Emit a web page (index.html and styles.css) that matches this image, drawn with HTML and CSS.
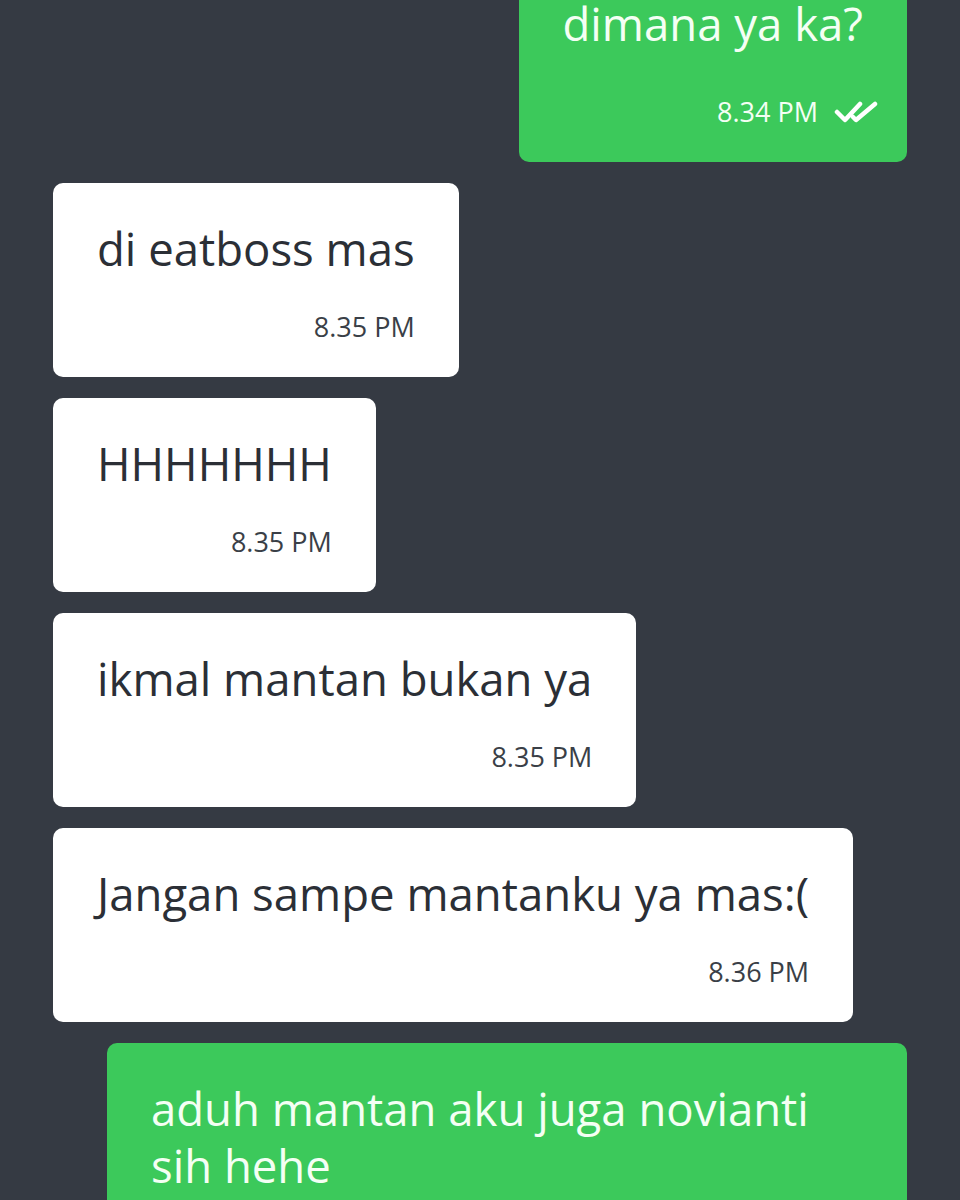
FILE: index.html
```html
<!DOCTYPE html>
<html lang="id">
<head>
<meta charset="utf-8">
<title>Chat</title>
<link rel="stylesheet" href="styles.css">
</head>
<body>
<main class="chat">
  <div class="bubble out">
    <p class="text">dimana ya ka?</p>
    <div class="meta"><span class="time">8.34 PM</span>
      <svg class="ticks" width="46" height="22" viewBox="0 0 46 22" aria-hidden="true">
        <path d="M3 11 L11 19 L26 3" fill="none" stroke="#fff" stroke-width="4.5" stroke-linecap="round" stroke-linejoin="round"/>
        <path d="M19 16 L22 19 L41 3" fill="none" stroke="#fff" stroke-width="4.5" stroke-linecap="round" stroke-linejoin="round"/>
      </svg>
    </div>
  </div>
  <div class="bubble in">
    <p class="text">di eatboss mas</p>
    <div class="meta"><span class="time">8.35 PM</span></div>
  </div>
  <div class="bubble in">
    <p class="text">HHHHHHH</p>
    <div class="meta"><span class="time">8.35 PM</span></div>
  </div>
  <div class="bubble in">
    <p class="text">ikmal mantan bukan ya</p>
    <div class="meta"><span class="time">8.35 PM</span></div>
  </div>
  <div class="bubble in">
    <p class="text">Jangan sampe mantanku ya mas:(</p>
    <div class="meta"><span class="time">8.36 PM</span></div>
  </div>
  <div class="bubble out wide">
    <p class="text">aduh mantan aku juga novianti sih hehe</p>
  </div>
</main>
</body>
</html>
```
FILE: styles.css
```css
html, body {
  margin: 0;
  padding: 0;
  background: #353a43;
  height: 100%;
  overflow: hidden;
}
body {
  font-family: "Open Sans", "DejaVu Sans", sans-serif;
}
.chat {
  display: flex;
  flex-direction: column;
  gap: 21px;
  padding: 0 53px;
  margin-top: -42px;
}
.bubble {
  box-sizing: border-box;
  border-radius: 10px;
  padding: 37px 44px 32px;
}
.bubble.in {
  align-self: flex-start;
  background: #ffffff;
  color: #2b2f36;
}
.bubble.in .text {
  white-space: nowrap;
}
.bubble.out {
  align-self: flex-end;
  max-width: 800px;
  background: #3cc95b;
  color: #f4fff4;
  padding-right: 27px;
}
.bubble.out .text {
  padding-right: 17px;
}
.bubble.out .meta {
  margin-top: 42px;
}
.text {
  margin: 0;
  font-size: 45.5px;
  line-height: 57px;
}
.meta {
  display: flex;
  justify-content: flex-end;
  align-items: center;
  gap: 16px;
  margin-top: 32px;
}
.time {
  font-size: 27px;
  line-height: 36px;
}
.bubble.in .time {
  color: #3a3f47;
}
.ticks {
  display: block;
}
```
